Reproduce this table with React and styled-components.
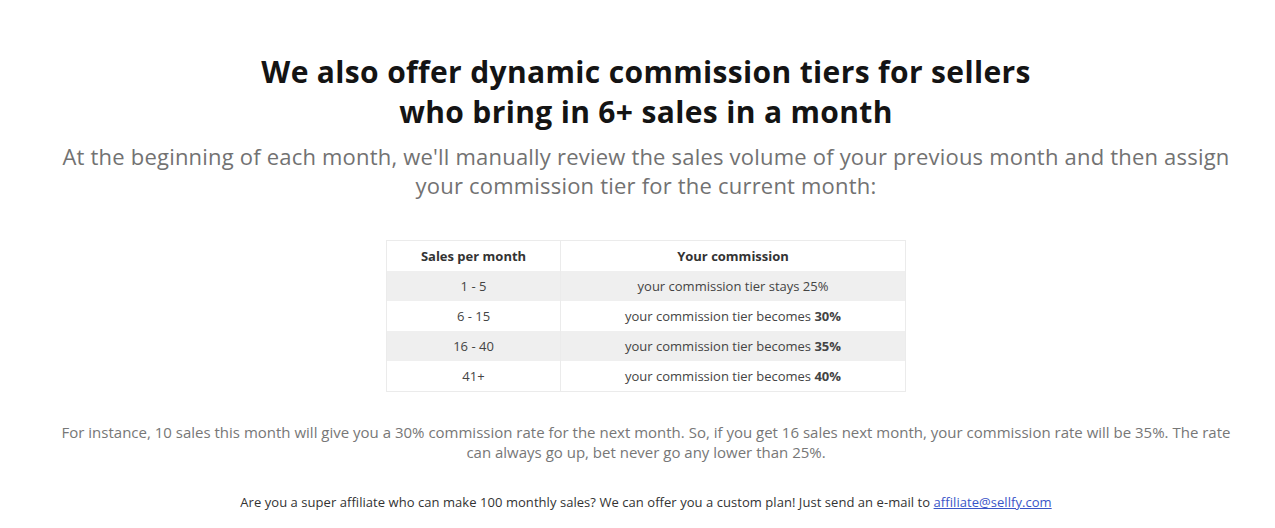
import React from 'react';
import styled, { createGlobalStyle } from 'styled-components';

const GlobalStyle = createGlobalStyle`
  body {
    margin: 0;
    background: #fff;
    font-family: "Open Sans", "Liberation Sans", sans-serif;
  }
`;

const Page = styled.div`
  width: 1180px;
  margin-left: 56px;
  padding-top: 52px;
  display: flex;
  flex-direction: column;
  align-items: center;
  text-align: center;
`;

const Title = styled.h2`
  margin: 0;
  font-size: 30px;
  line-height: 40px;
  font-weight: 700;
  letter-spacing: 0.35px;
  color: #141414;
`;

const Lead = styled.p`
  margin: 10px 0 0;
  font-size: 22px;
  line-height: 29px;
  letter-spacing: 0.2px;
  color: #727272;
`;

const Table = styled.table`
  margin-top: 40px;
  width: 520px;
  border-collapse: collapse;
  font-size: 13px;
  color: #444;
  border: 1px solid #ebebeb;
`;

const Row = styled.tr`
  background: ${p => (p.$shaded ? '#efefef' : '#fff')};
`;

const HeadCell = styled.th`
  height: 30px;
  padding: 0;
  font-weight: 700;
  color: #333;
  border-right: 1px solid #ebebeb;
  width: ${p => p.$w || 'auto'};
`;

const Cell = styled.td`
  height: 30px;
  padding: 0;
  border-right: 1px solid #ebebeb;
`;

const Note = styled.p`
  margin: 30px 0 0;
  font-size: 15px;
  line-height: 20px;
  color: #777;
`;

const Footer = styled.p`
  margin: 31px 0 0;
  font-size: 13px;
  letter-spacing: 0.05px;
  color: #333;
`;

const Link = styled.a`
  color: #3a55c8;
  text-decoration: underline;
`;

const tiers = [
  { range: '1 - 5', text: 'your commission tier stays 25%' },
  { range: '6 - 15', text: 'your commission tier becomes ', rate: '30%' },
  { range: '16 - 40', text: 'your commission tier becomes ', rate: '35%' },
  { range: '41+', text: 'your commission tier becomes ', rate: '40%' },
];

export default function App() {
  return (
    <>
      <GlobalStyle />
      <Page>
        <Title>
          We also offer dynamic commission tiers for sellers
          <br />
          who bring in 6+ sales in a month
        </Title>
        <Lead>
          At the beginning of each month, we'll manually review the sales volume of your previous month and then assign
          your commission tier for the current month:
        </Lead>
        <Table>
          <thead>
            <Row>
              <HeadCell $w="173px">Sales per month</HeadCell>
              <HeadCell>Your commission</HeadCell>
            </Row>
          </thead>
          <tbody>
            {tiers.map((t, i) => (
              <Row key={t.range} $shaded={i % 2 === 0}>
                <Cell>{t.range}</Cell>
                <Cell>
                  {t.text}
                  {t.rate && <b>{t.rate}</b>}
                </Cell>
              </Row>
            ))}
          </tbody>
        </Table>
        <Note>
          For instance, 10 sales this month will give you a 30% commission rate for the next month. So, if you get 16 sales next month, your commission rate will be 35%. The rate
          can always go up, bet never go any lower than 25%.
        </Note>
        <Footer>
          Are you a super affiliate who can make 100 monthly sales? We can offer you a custom plan! Just send an e-mail to{' '}
          <Link href="#">affiliate@sellfy.com</Link>
        </Footer>
      </Page>
    </>
  );
}
